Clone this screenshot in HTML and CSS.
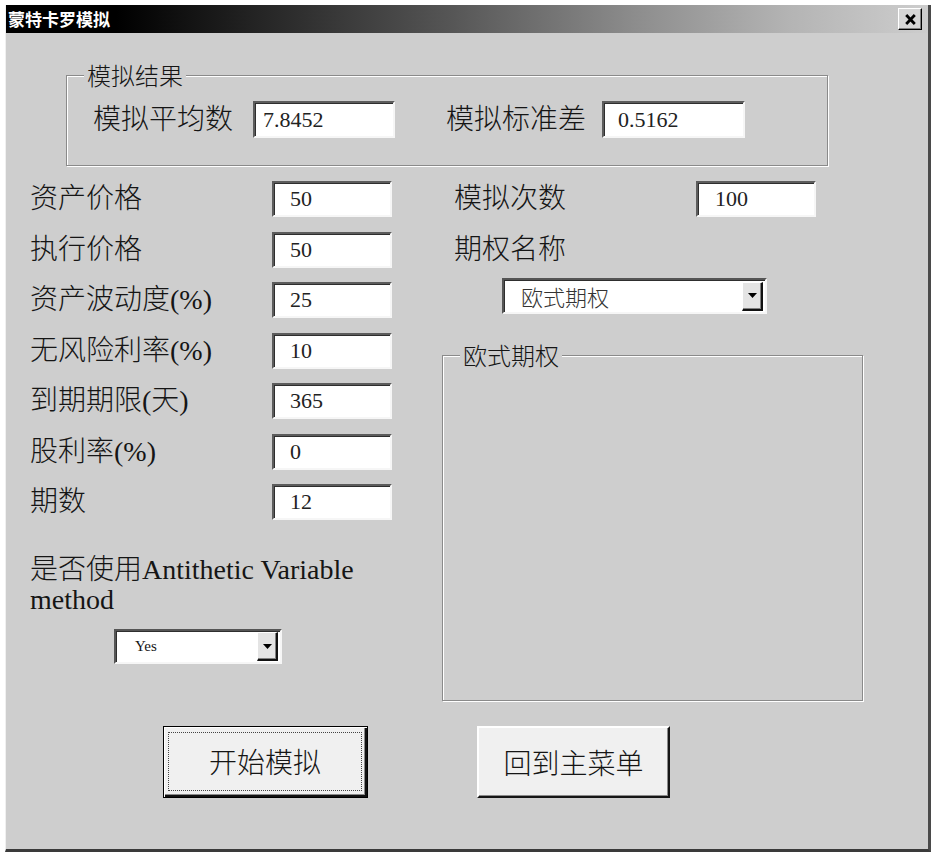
FILE: index.html
```html
<!DOCTYPE html>
<html lang="zh-CN">
<head>
<meta charset="utf-8">
<title>蒙特卡罗模拟</title>
<link rel="stylesheet" href="styles.css">
</head>
<body>
<div class="window">
  <div class="titlebar">
    <span class="title">蒙特卡罗模拟</span>
    <span class="close" aria-label="关闭">
      <svg width="11" height="11" viewBox="0 0 11 11"><path d="M1.2 1 L9.8 10 M9.8 1 L1.2 10" stroke="#000" stroke-width="2.8" fill="none"/></svg>
    </span>
  </div>
  <div class="client">
    <div class="group result-group">
      <span class="group-title">模拟结果</span>
      <div class="result-row">
        <span class="lbl lbl-mean">模拟平均数</span>
        <input class="field field-mean" type="text" value="7.8452" readonly>
        <span class="lbl lbl-std">模拟标准差</span>
        <input class="field field-std" type="text" value="0.5162" readonly>
      </div>
    </div>

    <div class="main">
      <div class="col-left">
        <div class="form">
          <span class="lbl">资产价格</span><input class="field" type="text" value="50">
          <span class="lbl">执行价格</span><input class="field" type="text" value="50">
          <span class="lbl">资产波动度(%)</span><input class="field" type="text" value="25">
          <span class="lbl">无风险利率(%)</span><input class="field" type="text" value="10">
          <span class="lbl">到期期限(天)</span><input class="field" type="text" value="365">
          <span class="lbl">股利率(%)</span><input class="field" type="text" value="0">
          <span class="lbl">期数</span><input class="field" type="text" value="12">
        </div>
        <div class="anti">是否使用Antithetic Variable method</div>
        <div class="select select-yes">
          <span class="select-text">Yes</span>
          <span class="drop"><svg width="9" height="5" viewBox="0 0 9 5"><path d="M0 0 H9 L4.5 5 Z" fill="#000"/></svg></span>
        </div>
      </div>

      <div class="col-right">
        <div class="form form-right">
          <span class="lbl">模拟次数</span><input class="field field-count" type="text" value="100">
          <span class="lbl">期权名称</span>
        </div>
        <div class="select select-opt">
          <span class="select-text">欧式期权</span>
          <span class="drop"><svg width="9" height="5" viewBox="0 0 9 5"><path d="M0 0 H9 L4.5 5 Z" fill="#000"/></svg></span>
        </div>
        <div class="group opt-group">
          <span class="group-title">欧式期权</span>
        </div>
      </div>
    </div>

    <div class="buttons">
      <button class="btn btn-default" type="button"><span class="focus">开始模拟</span></button>
      <button class="btn btn-back" type="button"><span class="plain">回到主菜单</span></button>
    </div>
  </div>
</div>
</body>
</html>
```

FILE: styles.css
```css
* { box-sizing: border-box; }

html, body {
  margin: 0;
  background: #ffffff;
}

body {
  font-family: "Liberation Serif", "Noto Sans CJK SC", serif;
  font-weight: 300;
  color: #151515;
}

.window {
  margin: 5px 0 0 5px;
  width: 926px;
  height: 847px;
  background: #cecece;
  border-left: 1px solid #f0f0f0;
  border-right: 3px solid #4a4a4a;
  border-bottom: 3px solid #3a3a3a;
  display: flex;
  flex-direction: column;
}

.titlebar {
  height: 28px;
  flex: none;
  display: flex;
  align-items: center;
  justify-content: space-between;
  padding: 0 6px 0 2px;
  background: linear-gradient(to right, #000 0%, #000 12%, #262626 28%, #555 48%, #8c8c8c 68%, #b4b4b4 85%, #cdcdcd 100%);
}

.title {
  font-family: "Noto Sans CJK SC", sans-serif;
  font-weight: 700;
  font-size: 17px;
  line-height: 20px;
  color: #ffffff;
}

.close {
  width: 24px;
  height: 22px;
  display: flex;
  align-items: center;
  justify-content: center;
  background: #d6d6d6;
  border: 1px solid;
  border-color: #ffffff #000000 #000000 #ffffff;
  box-shadow: inset -1px -1px 0 #808080;
}

.client {
  flex: 1;
  padding-left: 24px;
}

/* group boxes */
.group {
  border: 1px solid #8a8a8a;
  box-shadow: 1px 1px 0 #ffffff, inset 1px 1px 0 #ffffff;
}

.group-title {
  display: table;
  margin: -15px 0 0 17px;
  padding: 0 3px;
  background: #cecece;
  font-family: "Noto Sans CJK SC", sans-serif;
  font-weight: 300;
  font-size: 24px;
  line-height: 28px;
}

.result-group {
  margin: 42px 0 0 36px;
  width: 762px;
  height: 91px;
}

.result-row {
  display: flex;
  align-items: center;
  margin-top: 12px;
  padding-left: 26px;
}

.lbl {
  font-family: "Liberation Serif", "Noto Sans CJK SC", serif;
  font-weight: 300;
  font-size: 28px;
  line-height: 36px;
  white-space: nowrap;
}

.lbl-mean { width: 160px; }
.lbl-std { width: 156px; margin-left: 51px; }

.field {
  width: 120px;
  height: 36px;
  margin: 0;
  padding: 0 0 0 16px;
  background: #ffffff;
  border: 2px solid;
  border-color: #5c5c5c #f6f6f6 #f6f6f6 #5c5c5c;
  box-shadow: inset 1px 1px 0 #2e2e2e;
  font-family: "Liberation Serif", serif;
  font-size: 22px;
  color: #222;
  outline: none;
}

.field-mean { width: 142px; height: 37px; padding-left: 8px; }
.field-std { width: 143px; height: 37px; padding-left: 14px; }
.field-count { padding-left: 17px; }

.main {
  display: flex;
  margin-top: 15px;
}

.col-left {
  width: 412px;
  display: flex;
  flex-direction: column;
}

.col-right {
  width: 421px;
  display: flex;
  flex-direction: column;
}

.form {
  display: grid;
  grid-template-columns: 242px 120px;
  grid-auto-rows: 36px;
  row-gap: 14.5px;
  align-items: center;
}

.form-right {
  grid-template-columns: 254px 120px;
}

.form-right .lbl {
  padding-left: 12px;
}

.anti {
  width: 370px;
  margin-top: 35px;
  font-size: 28px;
  line-height: 30px;
}

/* combo boxes */
.select {
  display: flex;
  align-items: center;
  justify-content: space-between;
  background: #ffffff;
  border: 2px solid;
  border-color: #555555 #f6f6f6 #f6f6f6 #555555;
  box-shadow: inset 1px 1px 0 #2e2e2e;
}

.select-yes {
  width: 168px;
  height: 35px;
  margin: 14px 0 0 84px;
}

.select-yes .select-text {
  padding-left: 19px;
  font-family: "Liberation Serif", serif;
  font-size: 15px;
}

.select-opt {
  width: 265px;
  height: 36px;
  margin: 10.5px 0 0 60px;
}

.select-opt .select-text {
  padding-left: 17px;
  font-family: "Noto Sans CJK SC", sans-serif;
  font-weight: 300;
  font-size: 22px;
  color: #333;
}

.drop {
  width: 21px;
  height: 29px;
  margin-right: 2px;
  display: flex;
  align-items: center;
  justify-content: center;
  background: #e4e4e4;
  border-style: solid;
  border-width: 1px 2px 2px 1px;
  border-color: #ffffff #111111 #111111 #ffffff;
  box-shadow: inset -1px -1px 0 #808080;
}

.opt-group {
  margin-top: 41px;
  width: 421px;
  height: 346px;
}

/* buttons */
.buttons {
  display: flex;
  gap: 109px;
  margin: 25px 0 0 133px;
}

.btn {
  height: 72px;
  margin: 0;
  background: #f0f0f0;
  font-family: "Noto Sans CJK SC", sans-serif;
  font-weight: 300;
  font-size: 28px;
  color: #151515;
  cursor: default;
}

.btn-default {
  width: 205px;
  padding: 5px 5px 6px 4px;
  border: 1px solid #000000;
  box-shadow: inset 1px 1px 0 #ffffff, inset -2px -2px 0 #111111, inset -3px -3px 0 #8a8a8a;
}

.btn-back {
  width: 193px;
  padding: 0;
  border: 2px solid;
  border-color: #ffffff #151515 #151515 #ffffff;
  box-shadow: inset -1px -1px 0 #8a8a8a;
}

.focus {
  display: block;
  height: 100%;
  border: 1px dotted #444;
  line-height: 56px;
}

.plain {
  display: block;
  line-height: 66px;
}
```
